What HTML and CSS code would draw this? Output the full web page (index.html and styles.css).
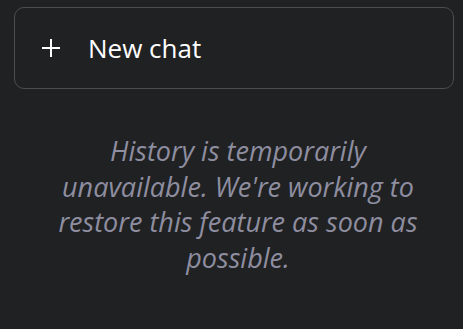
FILE: index.html
```html
<!DOCTYPE html>
<html>
<head>
<meta charset="utf-8">
<link rel="stylesheet" href="styles.css">
</head>
<body>
<div class="sidebar">
  <button class="new-chat">
    <svg class="plus" width="20" height="20" viewBox="0 0 20 20"><path d="M10 1v18M1 10h18" stroke="#fff" stroke-width="2" fill="none"/></svg>
    <span>New chat</span>
  </button>
  <p class="notice">History is temporarily unavailable. We're working to restore this feature as soon as possible.</p>
</div>
</body>
</html>
```
FILE: styles.css
```css
html, body {
  margin: 0;
  height: 100%;
  background: #202123;
}
.sidebar {
  padding: 7px 10px 0 14px;
  font-family: "Open Sans", sans-serif;
}
.new-chat {
  box-sizing: border-box;
  width: 440px;
  height: 82px;
  display: flex;
  align-items: center;
  gap: 27px;
  padding: 0 0 0 26px;
  background: transparent;
  border: 1px solid #4d4d4f;
  border-radius: 10px;
  color: #fff;
  font-family: inherit;
  font-size: 26px;
  cursor: pointer;
}
.plus { display: block; }
.notice {
  margin: 44px 0 0 4px;
  width: 440px;
  text-align: center;
  font-style: italic;
  font-size: 27px;
  line-height: 35.7px;
  color: #8e8ea0;
  padding: 0 20px;
  box-sizing: border-box;
}
```
